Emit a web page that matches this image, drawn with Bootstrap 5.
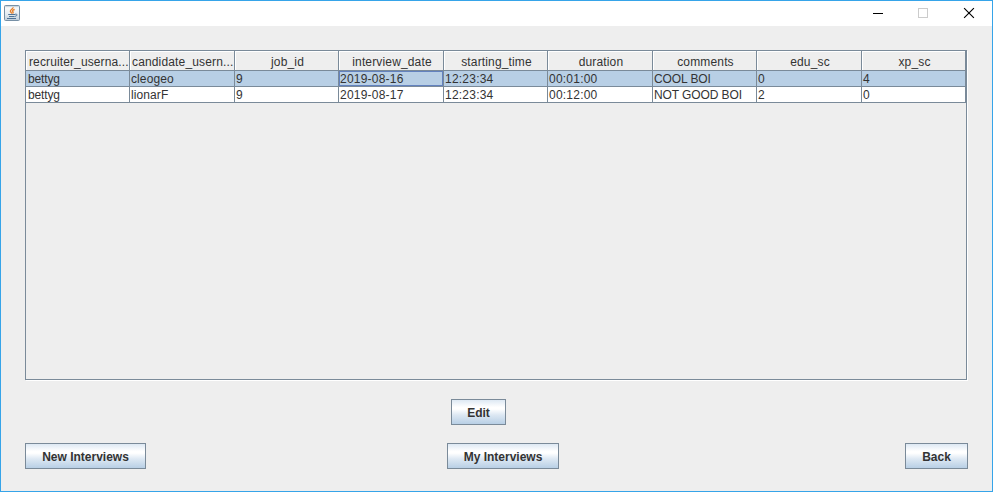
<!DOCTYPE html>
<html lang="en">
<head>
<meta charset="utf-8">
<meta name="viewport" content="width=device-width, initial-scale=1">
<title>Interviews</title>
<link href="https://cdn.jsdelivr.net/npm/bootstrap@5.3.0/dist/css/bootstrap.min.css" rel="stylesheet">
<style>
  :root { --line: #7a8a99; }
  body { font: 12px/15px "Liberation Sans", Arial, sans-serif; color: #333; }
  .app-window { height: 492px; border: 1px solid #36a4e9; background: #eee; }
  .title-strip { height: 25px; background: #fff; }
  .app-icon { margin: 4px 0 0 3px; }
  .win-btn { width: 45px; height: 25px; }
  .client { padding: 24px 24px 0; }
  .table-pane { height: 330px; width: 942px; border: 1px solid var(--line); box-shadow: 1px 1px 0 #fff; }
  .grid { width: 940px; table-layout: fixed; border-collapse: separate; border-spacing: 0; }
  .grid .w-a { width: 104px; }
  .grid .w-b { width: 105px; }
  .grid th { height: 20px; padding: 3px 0 0 2px; font-weight: 400; text-align: center; letter-spacing: .15px; line-height: 15px; white-space: nowrap; overflow: hidden;
    border-right: 1px solid var(--line); border-bottom: 1px solid var(--line); box-shadow: inset 1px 1px 0 #fff; }
  .grid th.cut { text-align: left; padding-left: 2px; letter-spacing: .15px; }
  .grid th.cut:first-child { padding-left: 3px; letter-spacing: .12px; }
  .grid td { height: 16px; padding: 1px 0 0 1px; line-height: 14px; letter-spacing: .22px; white-space: nowrap; background: #fff;
    border-right: 1px solid var(--line); border-bottom: 1px solid var(--line); }
  .grid .words { letter-spacing: -.1px; }
  .grid td:first-child { letter-spacing: -.15px; padding-left: 2px; }
  .grid td:nth-child(2) { letter-spacing: .1px; }
  .grid .picked td { background: #b8cfe5; }
  .grid .picked td.focused { box-shadow: inset 0 0 0 1px #6382bf; }
  .metal { height: 26px; padding: 3px 0 0; border: 1px solid var(--line); border-radius: 0; font-size: 12px; line-height: 15px; font-weight: 700; color: #333;
    background: linear-gradient(#dde8f3 0%, #fff 30%, #fff 38%, #dde8f3 62%, #b8cfe5 100%); }
  .edit-line { margin: 19px 0 18px; padding-left: 426px; }
  .b-edit { width: 55px; }
  .b-new { width: 121px; }
  .b-mine { width: 112px; margin-left: 301px; }
  .b-back { width: 63px; }
</style>
</head>
<body class="m-0 overflow-hidden">
<div class="app-window">
  <header class="title-strip d-flex justify-content-between">
    <svg class="app-icon" width="16" height="16" viewBox="0 0 16 16" aria-label="Java">
      <defs><linearGradient id="tile" x1="0" y1="0" x2="0" y2="1"><stop offset="0" stop-color="#a9bac8"/><stop offset=".15" stop-color="#f7f9fb"/><stop offset=".6" stop-color="#e4ebf1"/><stop offset="1" stop-color="#bccbd8"/></linearGradient></defs>
      <rect x=".5" y=".5" width="15" height="15" rx="1" fill="url(#tile)" stroke="#7790a6"/>
      <path d="M9 2.3C9.5 4 6 4.6 6.4 6.3 6.6 7.2 7.6 7.6 7.8 8.6M10.7 4.5C8.5 5 8 6 9 6.8 9.4 7.4 8.9 8 8.6 8.5" fill="none" stroke="#e9822c" stroke-width="1.4"/>
      <path d="M4.2 9.5H11M5 11.5H10.5M3 13.5H12" fill="none" stroke="#4f7396" stroke-width="1.1"/>
      <path d="M11 9.3C13.8 8.6 13.8 10.9 10.8 11.4" fill="none" stroke="#4f7396"/>
    </svg>
    <div class="d-flex">
      <svg class="win-btn" viewBox="0 0 45 25" shape-rendering="crispEdges"><path d="M16 12.5H26" stroke="#000"/></svg>
      <svg class="win-btn" viewBox="0 0 45 25" shape-rendering="crispEdges"><rect x="16.5" y="7.5" width="9" height="9" fill="none" stroke="#ccc"/></svg>
      <svg class="win-btn" viewBox="0 0 45 25"><path d="M17.1 7.1L26.9 16.9M26.9 7.1L17.1 16.9" stroke="#000" stroke-width="1.15"/></svg>
    </div>
  </header>
  <main class="client">
    <div class="table-pane">
      <table class="grid">
        <colgroup><col class="w-a"><col class="w-b"><col class="w-a"><col class="w-b"><col class="w-a"><col class="w-b"><col class="w-a"><col class="w-b"><col class="w-a"></colgroup>
        <thead><tr><th class="cut">recruiter_userna...</th><th class="cut">candidate_usern...</th><th>job_id</th><th>interview_date</th><th>starting_time</th><th>duration</th><th>comments</th><th>edu_sc</th><th>xp_sc</th></tr></thead>
        <tbody>
          <tr class="picked"><td>bettyg</td><td>cleogeo</td><td>9</td><td class="focused">2019-08-16</td><td>12:23:34</td><td>00:01:00</td><td class="words">COOL BOI</td><td>0</td><td>4</td></tr>
          <tr><td>bettyg</td><td>lionarF</td><td>9</td><td>2019-08-17</td><td>12:23:34</td><td>00:12:00</td><td class="words">NOT GOOD BOI</td><td>2</td><td>0</td></tr>
        </tbody>
      </table>
    </div>
    <div class="edit-line d-flex"><button type="button" class="btn metal b-edit">Edit</button></div>
    <div class="d-flex">
      <button type="button" class="btn metal b-new">New Interviews</button>
      <button type="button" class="btn metal b-mine">My Interviews</button>
      <button type="button" class="btn metal b-back ms-auto">Back</button>
    </div>
  </main>
</div>
<script src="https://cdn.jsdelivr.net/npm/bootstrap@5.3.0/dist/js/bootstrap.bundle.min.js"></script>
</body>
</html>
